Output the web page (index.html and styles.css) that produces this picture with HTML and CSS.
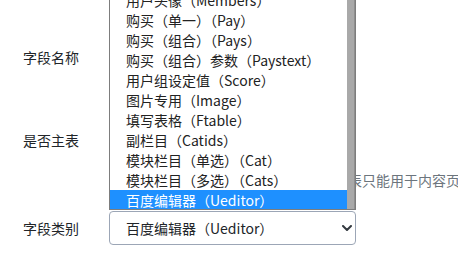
FILE: index.html
```html
<!DOCTYPE html>
<html lang="zh-CN">
<head>
<meta charset="utf-8">
<title>字段设置</title>
<link rel="stylesheet" href="styles.css">
</head>
<body>
<div class="form">
  <div class="row r1">
    <label class="lbl">字段名称</label>
    <div class="ctl"><input class="input" type="text" value=""></div>
  </div>
  <div class="row r2">
    <label class="lbl">是否主表</label>
    <div class="ctl">
      <div class="radios"><input type="radio" name="main" checked><input type="radio" name="main"></div>
      <div class="help">主表只能用于内容页</div>
    </div>
  </div>
  <div class="row r3">
    <label class="lbl">字段类别</label>
    <div class="ctl">
      <select class="select"><option>百度编辑器（Ueditor）</option></select>
    </div>
  </div>
</div>

<div class="dropdown">
  <ul class="items">
    <li>用户头像（Members）</li>
    <li>购买（单一）（Pay）</li>
    <li>购买（组合）（Pays）</li>
    <li>购买（组合）参数（Paystext）</li>
    <li>用户组设定值（Score）</li>
    <li>图片专用（Image）</li>
    <li>填写表格（Ftable）</li>
    <li>副栏目（Catids）</li>
    <li>模块栏目（单选）（Cat）</li>
    <li>模块栏目（多选）（Cats）</li>
    <li class="active">百度编辑器（Ueditor）</li>
  </ul>
  <div class="scrollbar"></div>
</div>
</body>
</html>
```
FILE: styles.css
```css
html, body {
  margin: 0;
  padding: 0;
  width: 458px;
  height: 262px;
  overflow: hidden;
  background: #fff;
}
body {
  position: relative;
  font-family: "Noto Sans CJK SC", sans-serif;
  font-size: 14px;
  color: #212529;
}
.form {
  padding-top: 40px;
}
.row {
  display: flex;
  align-items: flex-start;
}
.lbl {
  width: 109px;
  box-sizing: border-box;
  padding-left: 23px;
  line-height: 34px;
  flex: none;
}
.ctl {
  flex: none;
  width: 247px;
}
.input {
  display: block;
  box-sizing: border-box;
  width: 247px;
  height: 34px;
  margin: 0;
  border: 1px solid #ced4da;
  border-radius: 4px;
}
.r2 { margin-top: 49px; }
.radios {
  height: 34px;
  display: flex;
  align-items: center;
  gap: 20px;
  padding-left: 16px;
}
.radios input { margin: 0; }
.help {
  margin-top: 13px;
  line-height: 20px;
  white-space: nowrap;
  color: #6c757d;
  padding-left: 225px;
}
.r3 { margin-top: 21px; }
.select {
  appearance: none;
  -webkit-appearance: none;
  display: block;
  box-sizing: border-box;
  width: 247px;
  height: 34px;
  margin: 0;
  padding: 0 24px 0 16px;
  border: 1px solid #9ca6b6;
  border-radius: 4px;
  background-color: #fff;
  background-image: url("data:image/svg+xml,%3Csvg xmlns='http://www.w3.org/2000/svg' width='10' height='6' viewBox='0 0 10 6'%3E%3Cpath d='M1 1l4 4 4-4' fill='none' stroke='%23343a40' stroke-width='2' stroke-linecap='round' stroke-linejoin='round'/%3E%3C/svg%3E");
  background-repeat: no-repeat;
  background-position: right 3px center;
  background-size: 10px 6px;
  font-family: "Noto Sans CJK SC", sans-serif;
  font-size: 14px;
  color: #212529;
}

.dropdown {
  position: absolute;
  left: 109px;
  top: -10px;
  width: 247px;
  height: 220px;
  box-sizing: border-box;
  border: 1px solid #7d7d7d;
  border-top: none;
  background: #fff;
  display: flex;
  overflow: hidden;
}
.items {
  list-style: none;
  margin: 0;
  padding: 0;
  flex: 1;
}
.items li {
  height: 20px;
  line-height: 20px;
  padding-left: 16px;
  white-space: nowrap;
  color: #222;
}
.items li.active {
  background: #1e90ff;
  color: #fff;
}
.scrollbar {
  width: 8px;
  flex: none;
  background: #a9a9a9;
  box-shadow: inset -1px 0 0 #8f8f8f;
}
```
